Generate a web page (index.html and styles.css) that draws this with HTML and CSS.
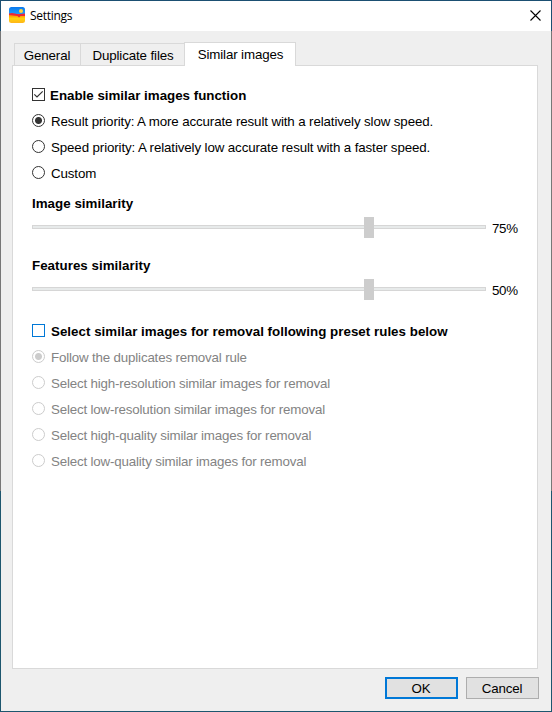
FILE: index.html
```html
<!DOCTYPE html>
<html lang="en">

<head>
    <meta charset="UTF-8">
    <meta name="viewport" content="width=device-width, initial-scale=1.0">
    <title>Settings</title>
    <link rel="stylesheet" href="styles.css">
</head>

<body>

    <div class="window">
        <header class="titlebar">
            <svg class="app-icon" width="16" height="16" viewBox="0 0 16 16">
                <defs>
                    <clipPath id="round"><rect width="16" height="16" rx="2.5"/></clipPath>
                    <linearGradient id="sky" x2="0" y2="1">
                        <stop offset="0" stop-color="#0a78ee"/>
                        <stop offset="1" stop-color="#22a4fa"/>
                    </linearGradient>
                    <linearGradient id="sand" x2="0" y2="1">
                        <stop offset="0" stop-color="#ff7a00"/>
                        <stop offset="0.5" stop-color="#ffd20a"/>
                        <stop offset="1" stop-color="#ffb51c"/>
                    </linearGradient>
                </defs>
                <g clip-path="url(#round)">
                    <rect width="16" height="8" fill="url(#sky)"/>
                    <rect y="7" width="16" height="9" fill="url(#sand)"/>
                    <path d="M0 6.500Q3 5.500 6 6.500T11 7L16 6.500V9H11.500L10 10.500 8.500 9 0 8Z" fill="#ec2638"/>
                    <circle cx="12" cy="4" r="2" fill="#ffd43a"/>
                </g>
            </svg>
            <span class="title">Settings</span>
            <svg class="close" width="11" height="11" viewBox="0 0 11 11">
                <path d="M.5.5l10 10M10.500.5l-10 10" stroke="#000" stroke-width="1.100"/>
            </svg>
        </header>

        <nav class="tabs">
            <div class="tab tab-general">General</div>
            <div class="tab tab-duplicate">Duplicate files</div>
            <div class="tab active">Similar images</div>
        </nav>

        <main class="panel">
            <label class="row bold enable">
                <svg class="mark" width="13" height="13" viewBox="0 0 13 13">
                    <rect x=".5" y=".5" width="12" height="12" fill="#fff" stroke="#333"/>
                    <path d="M2.300 6.300L5 9l5.700-5.700" fill="none" stroke="#333" stroke-width="1.200"/>
                </svg>
                <span>Enable similar images function</span>
            </label>
            <label class="row"><i class="radio checked"></i><span>Result priority: A more accurate result with a relatively slow speed.</span></label>
            <label class="row"><i class="radio"></i><span>Speed priority: A relatively low accurate result with a faster speed.</span></label>
            <label class="row"><i class="radio"></i><span>Custom</span></label>

            <section class="similarity">
                <h2 class="bold">Image similarity</h2>
                <div class="slider">
                    <div class="track"><div class="thumb"></div></div>
                    <span class="value">75%</span>
                </div>
            </section>
            <section class="similarity">
                <h2 class="bold">Features similarity</h2>
                <div class="slider">
                    <div class="track"><div class="thumb"></div></div>
                    <span class="value">50%</span>
                </div>
            </section>

            <div class="rules">
                <label class="row bold"><i class="checkbox"></i><span>Select similar images for removal following preset rules below</span></label>
                <label class="row disabled"><i class="radio checked"></i><span>Follow the duplicates removal rule</span></label>
                <label class="row disabled"><i class="radio"></i><span>Select high-resolution similar images for removal</span></label>
                <label class="row disabled"><i class="radio"></i><span>Select low-resolution similar images for removal</span></label>
                <label class="row disabled"><i class="radio"></i><span>Select high-quality similar images for removal</span></label>
                <label class="row disabled"><i class="radio"></i><span>Select low-quality similar images for removal</span></label>
            </div>
        </main>

        <footer class="buttons">
            <button type="button" class="btn primary">OK</button>
            <button type="button" class="btn">Cancel</button>
        </footer>
    </div>

</body>

</html>
```
FILE: styles.css
```css
* {
    box-sizing: border-box;
}

body {
    margin: 0;
    font-family: "Liberation Sans", Arial, sans-serif;
    font-size: 13.33px;
    line-height: 16px;
    letter-spacing: -0.12px;
    color: #000;
}

.window {
    display: flex;
    flex-direction: column;
    width: 552px;
    height: 712px;
    padding: 1px;
    background:
        linear-gradient(#efefef, #efefef) 1px 1px / 550px 710px no-repeat,
        linear-gradient(#1b4f72 31px, #777 31px, #777 491px, #1d566e 491px);
}

.titlebar {
    display: flex;
    align-items: center;
    flex: none;
    height: 30px;
    padding: 0 10px 0 8px;
    background: #fff;
}

.app-icon {
    margin-bottom: 2px;
}

.title {
    margin-left: 5px;
    font-family: "Open Sans", "Noto Sans", sans-serif;
    font-size: 12px;
    letter-spacing: -0.3px;
}

.close {
    margin-left: auto;
    margin-bottom: 2px;
}

.tabs {
    display: flex;
    align-items: flex-end;
    flex: none;
    height: 35px;
    padding-left: 13px;
    margin-bottom: -1px;
}

.tab {
    height: 22px;
    margin-bottom: 1px;
    padding-top: 4px;
    border: 1px solid #d9d9d9;
    border-bottom: none;
    text-align: center;
}

.tab-general {
    width: 66px;
    padding-right: 1px;
    border-right: none;
}

.tab-duplicate {
    width: 104px;
    padding-left: 1px;
    border-right: none;
}

.tab.active {
    z-index: 1;
    width: 112px;
    height: 24px;
    margin-bottom: 0;
    padding-left: 1px;
    background: #fff;
}

.panel {
    flex: none;
    width: 526px;
    height: 604px;
    margin-left: 11px;
    padding: 16px 19px 0;
    border: 1px solid #d9d9d9;
    background: #fff;
}

.row {
    display: flex;
    align-items: center;
    height: 26px;
    padding-bottom: 1px;
}

.row span {
    margin-left: 6px;
    padding-top: 2px;
    white-space: nowrap;
}

.enable span {
    margin-left: 5px;
}

.bold {
    font-weight: bold;
    letter-spacing: 0.03px;
}

.enable {
    letter-spacing: 0;
}

.checkbox {
    width: 13px;
    height: 13px;
    border: 1px solid #0078d7;
}

.radio {
    width: 13px;
    height: 13px;
    border: 1px solid #333;
    border-radius: 50%;
}

.radio.checked {
    background: radial-gradient(circle, #333 3px, #fff 4px);
}

.disabled {
    color: #838383;
    letter-spacing: -0.17px;
}

.disabled .radio {
    border-color: #ccc;
}

.disabled .checked {
    background: radial-gradient(circle, #ccc 3px, #fff 4px);
}

.similarity {
    height: 62px;
    padding-top: 4px;
}

.similarity h2 {
    height: 27px;
    margin: 0;
    padding-top: 6px;
    font-size: 13.33px;
    line-height: 16px;
}

.slider {
    display: flex;
    align-items: flex-start;
    height: 21px;
}

.track {
    display: flex;
    align-items: flex-start;
    width: 454px;
    height: 4px;
    margin-top: 8px;
    padding-left: 331px;
    border: 1px solid #d6d6d6;
    background: #e7eaea;
}

.thumb {
    flex: none;
    width: 10px;
    height: 21px;
    margin-top: -9px;
    background: #cdcdcd;
}

.value {
    margin-left: 6px;
    padding-top: 4px;
    letter-spacing: -0.3px;
}

.rules {
    padding-top: 8px;
}

.buttons {
    display: flex;
    justify-content: flex-end;
    gap: 8px;
    padding: 8px 12px 0 0;
}

.btn {
    width: 73px;
    height: 22px;
    padding: 1px 1px 0 0;
    border: 1px solid #adadad;
    background: #e1e1e1;
    font: inherit;
    letter-spacing: -0.15px;
    color: #000;
}

.btn.primary {
    border: 2px solid #0078d7;
}
```
